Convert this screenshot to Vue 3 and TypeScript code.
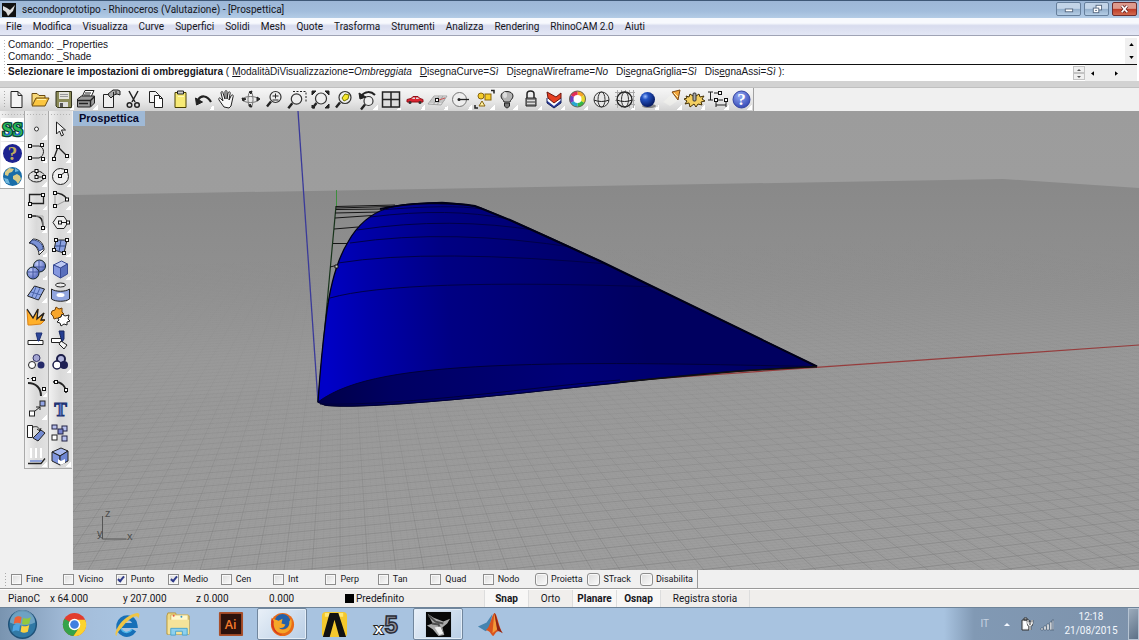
<script setup lang="ts">
import { ref } from 'vue'

interface Icon {
  name: string
  art: string
  more?: boolean
}

const menus = [
  'File', 'Modifica', 'Visualizza', 'Curve', 'Superfici', 'Solidi', 'Mesh',
  'Quote', 'Trasforma', 'Strumenti', 'Analizza', 'Rendering', 'RhinoCAM 2.0', 'Aiuti',
]

const options = [
  { before: '', key: 'M', after: 'odalitàDiVisualizzazione', value: 'Ombreggiata' },
  { before: '', key: 'D', after: 'isegnaCurve', value: 'Sì' },
  { before: 'D', key: 'i', after: 'segnaWireframe', value: 'No' },
  { before: 'Di', key: 's', after: 'egnaGriglia', value: 'Sì' },
  { before: 'Dis', key: 'e', after: 'gnaAssi', value: 'Sì' },
]

/* small square handle used by the curve tools */
const h = (x: number, y: number): string =>
  `<rect x="${x - 1.5}" y="${y - 1.5}" width="3" height="3" fill="#fff" stroke="#111"/>`
const line = (d: string, w = 1, c = '#222'): string =>
  `<path d="${d}" fill="none" stroke="${c}" stroke-width="${w}"/>`
const shape = (d: string, fill: string, stroke = '#222'): string =>
  `<path d="${d}" fill="${fill}" stroke="${stroke}" stroke-linejoin="round"/>`
const lens = (x: number, y: number, r: number, fill = '#eee'): string =>
  `<path d="M${x - r + 1} ${y + r - 1}l-4 5" stroke="#222" stroke-width="2.4"/><circle cx="${x}" cy="${y}" r="${r}" fill="${fill}" stroke="#333" stroke-width="1.2"/>`
const glyph = (t: string, x: number, y: number, size: number, fill: string, extra = ''): string =>
  `<text x="${x}" y="${y}" font-family="Liberation Serif, serif" font-weight="bold" font-size="${size}" text-anchor="middle" fill="${fill}" ${extra}>${t}</text>`

const toolbar: Icon[] = [
  { name: 'Nuovo', art: shape('M6 3.5h7l4 4v12H6z', '#f4f4f4') + line('M13 3.5v4h4') },
  { name: 'Apri', art: shape('M3 17V5.500h5l2 2h6v3', '#f9d978', '#6a4a10') + shape('M3 18l4-8h13l-4 8z', '#fbc640', '#6a4a10') + line('M8 11.500h9', 1, '#fff2a8') },
  { name: 'Salva', more: true, art: shape('M4 3.500h15.500v16H5.500L4 18z', '#8b8b58', '#33331c') + '<rect x="7" y="4" width="10" height="7" fill="#e4e4dc"/><rect x="7" y="14" width="9" height="5" fill="#ddd"/><rect x="8" y="15" width="3" height="4" fill="#555"/>' + line('M8 6.500h8M8 8.500h8', 1, '#999') },
  { name: 'Stampa', more: true, art: shape('M7 9L10 2.500h9L16 9z', '#fff') + line('M10 5h6M9 7h6') + shape('M2.500 11l4-3h13v7l-4 4h-13z', '#9a9a9a') + line('M2.500 12.500h13l4-4M15.500 12.500v6M4 15.500h9', 1.400) },
  { name: 'Proprietà documento', art: shape('M4.500 6.500h10v13h-10z', '#eee') + shape('M9 6l5-4h5l2 1v4l-3-1-3 1-3 3-2-2z', '#aaa') + line('M14.500 4v3M17 3v3') },
  { name: 'Taglia', art: line('M7 3l6 11M16 3l-6 11', 1.500) + '<circle cx="7.500" cy="17" r="2.300" fill="none" stroke="#222" stroke-width="1.500"/><circle cx="15" cy="17" r="2.300" fill="none" stroke="#222" stroke-width="1.500"/>' },
  { name: 'Copia', art: shape('M4.500 3.500h6l3 3v8h-9z', '#f4f4f4') + shape('M9.500 7.500h5l3 3v9h-8z', '#fff') + line('M14.500 7.500v3h3') },
  { name: 'Incolla', art: shape('M6 4.500h11v15H6z', '#f7ea76', '#4a4000') + shape('M8.500 3h6v3h-6z', '#ccc') + line('M9 8.500h6', 1, '#fff8b8') },
  { name: 'Annulla', more: true, art: line('M6 12c3-5 9-5 13 2', 2.200) + shape('M3.500 10l1 7 6-3z', '#222') },
  { name: 'Pan', art: shape('M8 19l-5-7c-1-2 1-3 2-1l2 2-2-8c0-2 2-2 2 0l2 6V4c0-2 2-2 2 0v7l1-6c1-2 3-1 2 1l-1 6 2-4c1-2 3-1 2 1l-2 9-2 2z', '#f7f7f7') },
  { name: 'Ruota vista', art: '<ellipse cx="11.500" cy="11.500" rx="8" ry="3" fill="none" stroke="#777"/><ellipse cx="11.500" cy="11.500" rx="2.500" ry="8" fill="none" stroke="#777"/>' + shape('M3 10l4 1-3 2zM21 11l-3 2v-4zM10 4l3-1-1 3zM10 18l3 1-2-3z', '#333') },
  { name: 'Zoom dinamico', art: lens(13.5, 9, 5.5) + line('M10.500 8h6M13.500 5.500v5M10.500 12h6') },
  { name: 'Zoom finestra', art: '<path d="M7 3.500h13v10" fill="none" stroke="#222" stroke-dasharray="2 1.500"/>' + lens(10.5, 11, 5.2) },
  { name: 'Zoom estensioni', art: lens(12, 10.5, 5.5) + shape('M3 3h4L3 7zM20 3h-4l4 4zM20 20h-4l4-4zM3 20v-3l3 3z', '#222') },
  { name: 'Zoom selezionati', art: lens(13, 9.5, 6) + shape('M10 10l3-4 4 1-1 4-4 2z', '#f7e82a', '#777600') },
  { name: 'Annulla vista', more: true, art: lens(12.5, 13, 4.5) + line('M5 8c4-5 10-5 14-1', 2) + shape('M3 5l1 6 6-2z', '#222') },
  { name: 'Quattro viste', more: true, art: '<rect x="3.500" y="4" width="17" height="15" fill="#ddd" stroke="#222" stroke-width="1.500"/>' + line('M12 4v15M3.500 11.500h17', 1.500) },
  { name: 'Vista da destra', more: true, art: shape('M4 11.500l4-1 2-2h5l2 2 3 1v2.500H4z', '#dd2531', '#8e1119') + '<path d="M9 11l1-1.500h2V11zM13 9.500h2l1 1.500h-3z" fill="#ddd"/><circle cx="7" cy="14.500" r="1.500" fill="#333"/><circle cx="17" cy="14.500" r="1.500" fill="#333"/>' },
  { name: 'Piano di costruzione', more: true, art: line('M2 16l6-8h13l-6 9zM5 12h14M7 10h13M4 14h13M7 17l6-9M11 17l6-9', 1, '#a5a5a5') + h(11, 12) + line('M13 12l6-2', 1, '#c55') },
  { name: 'Raggio', more: true, art: '<circle cx="10.500" cy="11.500" r="7" fill="#eee" stroke="#777"/><circle cx="10" cy="11.500" r="1.500" fill="#222"/>' + line('M11 11.500h9', 1.300) },
  { name: 'Seleziona', more: true, art: '<circle cx="8" cy="8" r="3" fill="#f5cc2a" stroke="#87650e"/><rect x="12" y="6" width="6" height="6" fill="#f5cc2a" stroke="#87650e"/>' + shape('M6 18l3-5 3 5z', '#fff0a0', '#87650e') + line('M18 2.500h3v3M2 17v3h3', 1.500) },
  { name: 'Nascondi', more: true, art: shape('M8 14c0-2-3-3-3-6 0-6 12-6 12 0 0 3-3 4-3 6z', '#b4b4b4') + shape('M8.500 15h5v3l-2 2h-1l-2-2z', '#777') + '<ellipse cx="9" cy="7" rx="2" ry="3" fill="#ddd"/>' },
  { name: 'Blocca', more: true, art: line('M8 10V6c0-4 7-4 7 0v4', 1.500) + shape('M7 10h10v8H7z', '#888') + line('M8 12.500h8M8 15.500h8', 1, '#ddd') },
  { name: 'Livelli', more: true, art: shape('M4 10l7 6 7-6v5l-7 5-7-5z', '#273b9c', '#17215b') + '<path d="M4.500 10l6.500 5 6.500-5v2.500L11 18l-6.500-5z" fill="#fff"/>' + shape('M4 4l9 5 5-4v5l-7 5-6-5z', '#e64022', '#6d160e') },
  { name: 'Colore', more: true, art: '<path d="M11.500 3a8 8 0 0 1 7 4l-7 4z" fill="#f5a626"/><path d="M18.500 7a8 8 0 0 1 0 8l-7-4z" fill="#e9d72a"/><path d="M18.500 15a8 8 0 0 1-7 4v-8z" fill="#37b944"/><path d="M11.500 19a8 8 0 0 1-7-4l7-4z" fill="#28a9d2"/><path d="M4.500 15a8 8 0 0 1 0-8l7 4z" fill="#6d3fc2"/><path d="M4.500 7a8 8 0 0 1 7-4v8z" fill="#e22c58"/><circle cx="11.500" cy="11" r="4" fill="#fff"/><circle cx="11.500" cy="11" r="8" fill="none" stroke="#665"/>' },
  { name: 'Wireframe', art: '<circle cx="11.500" cy="11.500" r="7.500" fill="#e8e8e8" stroke="#333"/><ellipse cx="11.500" cy="11.500" rx="3.500" ry="7.500" fill="none" stroke="#333"/>' + line('M4 12c4 2 11 2 15 0') },
  { name: 'Anteprima', more: true, art: line('M2 4.500h20M2 8.500h20M2 12.500h20M2 16.500h20M4.500 2v18M8.500 2v18M12.500 2v18M16.500 2v18M20.500 2v18', 1, '#aaa') + '<circle cx="11.500" cy="11.500" r="7.500" fill="#e8e8e8" stroke="#222" stroke-width="1.300"/><ellipse cx="12" cy="11.500" rx="3.500" ry="7.500" fill="none" stroke="#333"/>' + line('M4 12c4 2 11 2 15 0') },
  { name: 'Renderizza', more: true, art: '<ellipse cx="13" cy="18" rx="7" ry="2" fill="#888"/><circle cx="11.500" cy="11.500" r="7.500" fill="url(#ball)"/>' },
  { name: 'Luce', more: true, art: '<path d="M3 14L14 4l5 8-9 6z" fill="#f5f5f0" opacity=".5"/>' + shape('M12 4l8-2-2 10z', '#f3a63c', '#7d4a17') + line('M14 5l4 4', 1, '#fff2b8') },
  { name: 'Opzioni', more: true, art: shape('M3 8l3 1 1-3 3 2 1-3 2 3 3-2 1 3 4-1-2 3 3 2-4 1 1 3-4-1-2 3-2-3-4 3-1-4-4 1 2-3-3-2 3-1z', '#f3cf62', '#443107') + '<rect x="10" y="5" width="3" height="8" rx="1" fill="#aaa" stroke="#333"/>' },
  { name: 'Quote', more: true, art: line('M2 4h5M2 12h5M4.500 4v8M8 5h5M12 12h5M10 13v6M20 13v6M10 17h10') + h(14, 5) + h(10, 12) + h(20, 12) },
  { name: 'Guida', more: true, art: '<circle cx="11.500" cy="11.500" r="8.500" fill="url(#help)" stroke="#3444a0"/>' + glyph('?', 11.5, 17, 17, '#fff') },
]

const plugins: Icon[] = [
  { name: 'RhinoCAM', art: '<rect width="23" height="23" fill="#fff"/>' + glyph('SS', 11.5, 18, 19, '#2dbb55', 'stroke="#06433a" stroke-width="2.500" paint-order="stroke"') + line('M4 16c3 2 5 0 5-3M14 16c3 2 5 0 5-3', 1.5, '#2467d9') },
  { name: 'Guida RhinoCAM', art: '<rect width="23" height="23" fill="#fff"/><circle cx="11.500" cy="11.500" r="9.500" fill="#1d2390"/>' + glyph('?', 11.5, 18, 19, '#bfae5e') },
  { name: 'Sito web', art: '<rect width="23" height="23" fill="#fff"/><circle cx="11.500" cy="11.500" r="9.500" fill="#196da8"/><path d="M4 7l4-4 5 1-2 3-3 1-1 3-3-1zM12 11l4-2 3 2 1 3-3 5-2-3-3-2z" fill="#d8cb87"/><path d="M3 13l4 1 2 5-4-1zM14 3l4 3-4 1z" fill="#72b8dd"/>' },
]

const leftTools: Icon[] = [
  { name: 'Punto', more: true, art: '<circle cx="11.500" cy="11" r="2" fill="#fff" stroke="#333"/>' },
  { name: 'Curva', more: true, art: line('M5 5h9c6 1 6 10 0 12H6') + h(5, 5) + h(17, 4) + h(5, 17) + h(18, 18) },
  { name: 'Ellisse', more: true, art: '<ellipse cx="11.500" cy="11.500" rx="8" ry="5.500" fill="none" stroke="#222"/>' + line('M11.500 6v6h8') + h(11.5, 6) + h(11.5, 12) + h(19, 12) },
  { name: 'Rettangolo', more: true, art: line('M4.500 6.500h14v9h-14z', 1.300) + h(5, 16) + h(18, 7) },
  { name: 'Raccorda curve', more: true, art: line('M5 5h5c7 0 8 5 8 12', 1.700) + line('M11 5h7v12', 1, '#aaa') + h(5, 5) + h(18, 17) },
  { name: 'Superficie rete', more: true, art: shape('M4 8l4-4c7 0 11 5 11 11l-5 5c0-6-4-11-10-12z', '#fff') + shape('M7 5c7 0 11 4 11 9l-4 2c-1-4-4-7-9-8z', '#7a91d5', '#31457e') },
  { name: 'Sfere', more: true, art: '<circle cx="14.500" cy="8" r="6" fill="url(#solid)" stroke="#122"/>' + line('M9 9h11M14 2v12', 1, '#4456a0') + '<circle cx="8" cy="15" r="6" fill="url(#solid)" stroke="#122"/>' + line('M2 14h12M8 9v12', 1, '#4456a0') },
  { name: 'Superficie', more: true, art: shape('M2.500 15l7-10 10 3-6 11z', '#91a8e6') + line('M6 11l10 3M11 6l-4 10M15 7l-5 11', 1, '#4a63a8') },
  { name: 'Esplodi', art: shape('M3 20L2 5l6 8 5-9-1 10 7-6-3 7h4l-4 4-10 1z', '#ffb02a', '#d98218') + line('M2 4l6 9 5-9-1 10 7-6-3 7h4', 1.300) },
  { name: 'Taglia oggetto', art: shape('M3 12.500h15v4H3z', '#fff') + shape('M11 5h6l-3 8h-1z', '#2c4699', '#1c2e74') },
  { name: 'Raggruppa', art: '<circle cx="11.500" cy="7" r="3.500" fill="#a2a4d2" stroke="#336"/><circle cx="7" cy="14" r="3.500" fill="#fff" stroke="#222"/><circle cx="16" cy="14" r="3.500" fill="#252a69"/>' },
  { name: 'Modifica punti', more: true, art: line('M3 8c8 0 13 5 13 13', 2) + '<path d="M2 3.500h8" stroke="#333" stroke-dasharray="2 2"/>' + h(9, 4) + h(19, 14) },
  { name: 'Sposta', more: true, art: '<rect x="4.500" y="13" width="5" height="5" fill="#fff" stroke="#222"/><rect x="15" y="3" width="5" height="5" fill="#93a5e5" stroke="#222"/>' + line('M10 13l5-4M11 9h4v3') },
  { name: 'Ruota oggetto', art: shape('M2.500 4.500h5v12h-5z', '#fff') + line('M8 6c4-1 6 0 7 4M12 8l3 2 1-3') + shape('M8 17l8-8 4 3-7 8z', '#748bd2') },
  { name: 'Proietta', more: true, art: line('M6 3v10M11 3v10M16 3v10', 2, '#fff') + line('M3 18.500h13l4-5', 1.300) + line('M5 16h12', 2, '#8da0d8') },
]

const rightTools: Icon[] = [
  { name: 'Seleziona oggetto', art: shape('M7.500 4v12l3-3 2 5 2-1-2-5h4z', '#f4f4f4') },
  { name: 'Polilinea', more: true, art: line('M5 17L9 6l9 9', 1.300) + h(5, 18) + h(9, 6) + h(18, 15) },
  { name: 'Cerchio', more: true, art: '<circle cx="11.500" cy="11.500" r="8" fill="#eee" stroke="#222"/>' + line('M11 11l6-5') + h(11, 11) + h(17, 6) },
  { name: 'Arco', more: true, art: line('M6 5c6 0 10 3 12 6', 1.3) + line('M6 5v13L18 12', 1, '#999') + h(6, 5) + h(18, 11.5) + h(6, 18) },
  { name: 'Poligono', more: true, art: shape('M4 11.500l4-6h7l4 6-4 6H8z', '#eee') + line('M11 11.500h8') + h(11, 11.500) + h(19, 11.500) },
  { name: 'Superficie da punti', more: true, art: shape('M7 5h11l-3 13-10-3z', '#8ca2e0') + line('M6 11h11M12 5l-2 12', 1, '#314987') + h(7, 5) + h(18, 5) + h(5, 15) + h(15, 18) },
  { name: 'Parallelepipedo', more: true, art: shape('M4.500 7l8-4 6 3-7 4z', '#bdc9f3', '#3a4c94') + shape('M4.500 7l7 3v10l-7-4z', '#8497df', '#3a4c94') + shape('M11.500 10l7-4v10l-7 4z', '#5a70bd', '#3a4c94') },
  { name: 'Superficie da curva', more: true, art: '<ellipse cx="11.500" cy="4" rx="5" ry="2" fill="#eee" stroke="#222"/>' + shape('M2.500 8c4 3 14 3 18 0v10c-4 3-14 3-18 0z', '#91a5df') + '<ellipse cx="11.500" cy="14" rx="4" ry="2" fill="#fff"/>' },
  { name: 'Unisci', art: shape('M3 6l3-1 1-3 3 2 3-1v4l2 2-3 2-1 3-3-1-3 1-1-3-2-2z', '#f7a52a', '#70420c') + shape('M9 13l3-1 1-3 3 2 4-1-1 4 2 2-3 1v3l-3-1-3 2-1-3-3-1 2-2z', '#fff') },
  { name: 'Dividi', art: shape('M2.500 10.500h10v4h-10z', '#fff') + shape('M10 3h5v8l-2 3z', '#243d92', '#17265e') + shape('M12 13l6 4-3 4-5-5z', '#f3f3f3') },
  { name: 'Separa gruppo', more: true, art: '<circle cx="12" cy="8" r="4" fill="#b3b7dd" stroke="#1b1d48" stroke-width="2"/><circle cx="8" cy="14" r="4" fill="#fff" stroke="#1b1d48" stroke-width="1.500"/><circle cx="15" cy="14" r="4" fill="#1e2053"/>' },
  { name: 'Curva libera', art: line('M4 7c9-1 13 5 13 11', 1.700) + h(7, 7) + h(17, 15) },
  { name: 'Testo', art: glyph('T', 11.5, 18, 19, '#5876ca', 'stroke="#1b3070"') },
  { name: 'Serie', art: '<rect x="3" y="4" width="5" height="4" fill="#b8c1ef" stroke="#224"/><rect x="13" y="5" width="5" height="5" fill="#b8c1ef" stroke="#224"/><rect x="9" y="8" width="5" height="5" fill="#7884d0" stroke="#224"/><rect x="3" y="14" width="5" height="5" fill="#fff" stroke="#222"/><rect x="13" y="15" width="5" height="5" fill="#b8c1ef" stroke="#224"/>' },
  { name: 'Estrai superficie', more: true, art: shape('M3 7l9-4 7 3-8 5z', '#a7b9f0') + shape('M3 7l8 4v9l-8-4z', '#8096df') + shape('M11 11l8-5v10l-8 4z', '#6d86d3') + '<path d="M9 14l3 2 4-2v4l-4 2-3-2z" fill="#fff"/>' },
]

const snaps = ref([
  { label: 'Fine', on: false }, { label: 'Vicino', on: false }, { label: 'Punto', on: true },
  { label: 'Medio', on: true }, { label: 'Cen', on: false }, { label: 'Int', on: false },
  { label: 'Perp', on: false }, { label: 'Tan', on: false }, { label: 'Quad', on: false },
  { label: 'Nodo', on: false }, { label: 'Proietta', on: false, wide: true },
  { label: 'STrack', on: false, wide: true }, { label: 'Disabilita', on: false, wide: true },
])

const modes = ref([
  { label: 'Snap', on: true }, { label: 'Orto', on: false },
  { label: 'Planare', on: true }, { label: 'Osnap', on: true },
])

const apps: (Icon & { open?: boolean })[] = [
  { name: 'Chrome', art: '<circle cx="14" cy="14" r="12" fill="#e23c2e"/><path d="M14 14L3.500 8A12 12 0 0 0 13 26l6-9z" fill="#35a34a"/><path d="M14 9h11a12 12 0 0 1-12 17l6-9z" fill="#fbd42d"/><circle cx="14" cy="14" r="6" fill="#fff"/><circle cx="14" cy="14" r="4.500" fill="#3e7fe0"/>' },
  { name: 'Internet Explorer', art: '<path d="M22 20c-6 9-18 3-16-6S22 4 23 15H9" fill="none" stroke="#1770b8" stroke-width="5"/><path d="M20 19c-5 6-12 3-12-4" fill="none" stroke="#4bb6ea" stroke-width="1.500"/><path d="M4 26C-1 25 8 5 25 2c4 0 2 4 1 6 0-6-9 0-15 7S3 24 4 26" fill="#efc545"/>' },
  { name: 'Esplora risorse', art: '<path d="M2 5l1-3h8l1 3h13v19H2z" fill="#efd985" stroke="#b6973e"/><path d="M6 4h18v12H6z" fill="#fff8cd" stroke="#cdb35d"/><path d="M3 9h22v15H3z" fill="#f5e39a"/><path d="M6 25v-7h17v7h-5v-4h-7v4z" fill="#8ed0ed" stroke="#4aa4cf"/><circle cx="9" cy="5" r="1" fill="#e54"/><circle cx="17" cy="6" r="1" fill="#39c"/>' },
  { name: 'Illustrator', art: '<rect x="2" y="1" width="25" height="25" rx="1" fill="#a84f2b"/><rect x="4" y="3" width="21" height="21" fill="#2c120c"/><text x="8" y="19" font-family="Open Sans, sans-serif" font-size="13" font-weight="600" fill="#f47b2d">Ai</text>' },
  { name: 'Firefox', open: true, art: '<circle cx="14" cy="14" r="12" fill="#e86a18"/><circle cx="14" cy="11" r="8" fill="#2461a9"/><path d="M3 7c2 2 4 2 7 3l4-2-1 5 4 1c-1 4-5 4-7 3 4 5 12 2 11-6l2-3c2 8-2 15-9 15S1 16 3 7z" fill="#f5a729"/><path d="M3 7C0 17 7 25 14 25c-7-2-10-8-9-14z" fill="#d7371f"/>' },
  { name: 'Ansys', art: '<rect x="1" y="1" width="26" height="26" rx="4" fill="#f4c82d"/><path d="M4 2h19v4H4z" fill="#ffe876"/><path d="M2 27L9 2h9l8 25h-7L14 9 9 27z" fill="#111"/>' },
  { name: 'Ricerca X5', art: '<text x="19" y="23" font-family="Liberation Sans, sans-serif" font-weight="bold" font-size="25" text-anchor="middle" fill="#8f929e" stroke="#292b35" stroke-width="1.500">5</text><text x="6" y="24" font-family="Liberation Sans, sans-serif" font-weight="bold" font-size="16" text-anchor="middle" fill="#fff" stroke="#222" stroke-width="2" paint-order="stroke">x</text>' },
  { name: 'Rhinoceros', open: true, art: '<rect x="1" y="1" width="26" height="26" fill="#080808"/><path d="M3 3l6 4 10 4 7-3-3 5-5 4 2 8-6 1-6-7-6-4 6-2z" fill="#aaa"/><path d="M4 5l7 6 8 2M7 13l7 1 4 8" fill="none" stroke="#4d4d4d" stroke-width="2"/><path d="M10 17l6-1 3 7-4 2z" fill="#eee"/>' },
  { name: 'Matlab', art: '<path d="M1 16l9-4 6-9-3 14-4 4z" fill="#4584b0"/><path d="M9 20c5-3 6-16 9-18 3 0 5 17 9 21-5-4-7-2-10 3-2 0-3-6-8-6z" fill="#d8531f"/><path d="M18 2l-2 21 5-4z" fill="#f39a3a"/><path d="M18 2c2 0 4 16 9 21l-6-3z" fill="#8b2418"/>' },
]

/* Ground grid: two families of lines, evenly spaced on the front edge, each
   running to its own vanishing point. */
const front = 570
const family = (vx: number, vy: number, from: number, to: number, step: number, reach: number): string => {
  const parts: string[] = []
  for (let x = from; x <= to; x += step) {
    const ex = x + (vx - x) * reach
    const ey = front + (vy - front) * reach
    parts.push(`M${x} ${front}L${ex.toFixed(1)} ${ey.toFixed(1)}`)
  }
  return parts.join('')
}
const gridMajor = family(341, 135, -1900, 2900, 28, 0.85) + family(4631, 117, -9000, 1200, 100, 1)
const gridMinor = family(341, 135, -700, 1700, 7, 0.7) + family(4631, 117, -2600, 1200, 25, 1)

const skin = 'M318 402C320 372 322 349 326 318C330 285 337 260 348 242C358 224 372 213 388 208C404 203 424 203 442 202.500C458 204 472 204 486 210C520 224 560 242 600 261L817 366.500C730 370 665 377 615 383C540 391 470 399 410 403C370 406 340 407 325 405Z'
const struts = 'M336 206.500L395 205M336 208L390 206.500M336 209.500L384 209M335 213L380 212M335 218L372 215.500M334 229L358 227M333 243.500h14M330 267l8-2M327 304l3-1'
const ribs = 'M380 210Q450 204 482 209M370 217Q450 207 508 219M357 230Q450 216 540 231M350 243Q450 228 578 248M338 263Q430 248 620 265M330 298Q400 278 660 287'
</script>

<template>
  <div class="desktop">
    <svg class="defs" aria-hidden="true">
      <defs>
        <radialGradient id="ball" cx=".35" cy=".3" r=".7"><stop offset="0" stop-color="#9fc0ff" /><stop offset=".3" stop-color="#2454c4" /><stop offset="1" stop-color="#061a62" /></radialGradient>
        <radialGradient id="help" cx=".4" cy=".3" r=".8"><stop offset="0" stop-color="#93a9f4" /><stop offset="1" stop-color="#2b3fae" /></radialGradient>
        <radialGradient id="solid" cx=".35" cy=".3" r=".8"><stop offset="0" stop-color="#c0ccfa" /><stop offset="1" stop-color="#4a5eb4" /></radialGradient>
      </defs>
    </svg>

    <header class="title">
      <svg class="app-icon" viewBox="0 0 14 14" aria-hidden="true"><rect width="14" height="14" fill="#111" /><path d="M1 3l4 2 3 2 5-5-2 6-2 2-3 3-2-4-3-2z" fill="#ddd" /></svg>
      <h1>secondoprototipo - Rhinoceros (Valutazione) - [Prospettica]</h1>
      <div class="window-buttons">
        <button aria-label="Riduci a icona"><svg viewBox="0 0 24 13"><rect x="8.500" y="6.500" width="8" height="3" fill="#fff" stroke="#566880" /></svg></button>
        <button aria-label="Ripristina"><svg viewBox="0 0 24 13"><rect x="11.500" y="2.500" width="6" height="5" fill="#fff" stroke="#566880" /><rect x="8.500" y="5.500" width="6" height="5" fill="#fff" stroke="#566880" /><rect x="10.500" y="7.500" width="2" height="1" fill="#566880" /></svg></button>
        <button class="close" aria-label="Chiudi"><svg viewBox="0 0 24 13"><path d="M9 3l6 7M15 3l-6 7" stroke="#612020" stroke-width="3.500" /><path d="M9 3l6 7M15 3l-6 7" stroke="#fff" stroke-width="2" /></svg></button>
      </div>
    </header>

    <nav class="menu">
      <button v-for="m in menus" :key="m">{{ m }}</button>
    </nav>

    <section class="command">
      <div class="history">
        <div class="lines"><p>Comando: _Properties</p><p>Comando: _Shade</p></div>
        <div class="scroll-v">
          <button aria-label="Scorri su"><svg viewBox="0 0 6 4"><path d="M0 4l3-4 3 4z" /></svg></button>
          <button aria-label="Scorri giù"><svg viewBox="0 0 6 4"><path d="M0 0l3 4 3-4z" /></svg></button>
        </div>
      </div>
      <div class="prompt">
        <label for="cmd"><b>Selezionare le impostazioni di ombreggiatura</b> (<span v-for="o in options" :key="o.value + o.after" class="option">{{ o.before }}<u>{{ o.key }}</u>{{ o.after }}=<i>{{ o.value }}</i></span> ):</label>
        <input id="cmd" type="text" autocomplete="off">
        <div class="spin">
          <button aria-label="Precedente"><svg viewBox="0 0 6 4"><path d="M1 3l2-2 2 2z" fill="#555" /></svg></button>
          <button aria-label="Successivo"><svg viewBox="0 0 6 4"><path d="M1 1l2 2 2-2z" fill="#555" /></svg></button>
        </div>
        <div class="scroll-h">
          <button aria-label="Scorri a sinistra"><svg viewBox="0 0 4 6"><path d="M4 0L0 3l4 3z" /></svg></button>
          <button aria-label="Scorri a destra"><svg viewBox="0 0 4 6"><path d="M0 0l4 3-4 3z" /></svg></button>
        </div>
      </div>
    </section>

    <div class="toolbar-row">
      <div class="toolbar" role="toolbar" aria-label="Standard">
        <button v-for="t in toolbar" :key="t.name" :aria-label="t.name" :class="{ more: t.more }">
          <svg viewBox="0 0 23 23" v-html="t.art"></svg>
        </button>
      </div>
    </div>

    <main class="work">
      <aside class="side">
        <div class="palette short">
          <button v-for="t in plugins" :key="t.name" :aria-label="t.name"><svg viewBox="0 0 23 23" v-html="t.art"></svg></button>
        </div>
        <div class="palette">
          <button v-for="t in leftTools" :key="t.name" :aria-label="t.name" :class="{ more: t.more }"><svg viewBox="0 0 23 23" v-html="t.art"></svg></button>
        </div>
        <div class="palette">
          <button v-for="t in rightTools" :key="t.name" :aria-label="t.name" :class="{ more: t.more }"><svg viewBox="0 0 23 23" v-html="t.art"></svg></button>
        </div>
      </aside>

      <section class="viewport">
        <svg class="scene" viewBox="73 111 1066 459" preserveAspectRatio="xMinYMin slice" role="img" aria-label="Vista prospettica">
          <defs>
            <linearGradient id="sky" x1="0" y1="0" x2="0" y2="1"><stop offset="0" stop-color="#9c9c9c" /><stop offset="1" stop-color="#a3a3a3" /></linearGradient>
            <linearGradient id="ground" gradientUnits="userSpaceOnUse" x1="0" y1="185" x2="0" y2="570"><stop offset="0" stop-color="#898989" /><stop offset=".25" stop-color="#909090" /><stop offset=".45" stop-color="#999" /><stop offset="1" stop-color="#9e9e9e" /></linearGradient>
            <linearGradient id="major" gradientUnits="userSpaceOnUse" x1="0" y1="230" x2="0" y2="570"><stop offset="0" stop-color="#777" stop-opacity="0" /><stop offset=".4" stop-color="#777" stop-opacity=".1" /><stop offset="1" stop-color="#747474" stop-opacity=".4" /></linearGradient>
            <linearGradient id="minor" gradientUnits="userSpaceOnUse" x1="0" y1="260" x2="0" y2="570"><stop offset="0" stop-color="#888" stop-opacity="0" /><stop offset="1" stop-color="#808080" stop-opacity=".14" /></linearGradient>
            <linearGradient id="skin" gradientUnits="userSpaceOnUse" x1="320" y1="310" x2="640" y2="280"><stop offset="0" stop-color="#0000c8" /><stop offset=".15" stop-color="#0000ab" /><stop offset=".4" stop-color="#000083" /><stop offset="1" stop-color="#000060" /></linearGradient>
            <linearGradient id="belly" gradientUnits="userSpaceOnUse" x1="318" y1="0" x2="817" y2="0"><stop offset="0" stop-color="#000048" /><stop offset=".15" stop-color="#000062" /><stop offset=".5" stop-color="#000078" /><stop offset="1" stop-color="#000060" /></linearGradient>
            <clipPath id="floor"><path d="M73 195L1003 179L1139 188V570H73z" /></clipPath>
            <clipPath id="body"><path :d="skin" /></clipPath>
          </defs>
          <rect x="73" y="111" width="1066" height="459" fill="url(#sky)" />
          <path d="M73 195L1003 179L1139 188V570H73z" fill="url(#ground)" />
          <g clip-path="url(#floor)" fill="none" stroke-width="1">
            <path :d="gridMinor" stroke="url(#minor)" />
            <path :d="gridMajor" stroke="url(#major)" />
          </g>
          <path d="M298 111L318 402" stroke="#3a3a9a" stroke-width="1.300" />
          <path d="M318 402L1139 345" stroke="#963c3c" stroke-width="1.200" />
          <path d="M336.500 190V206" stroke="#3d8e3d" />
          <path d="M336 206L318 402" stroke="#17331a" stroke-width="1.200" />
          <path :d="struts" fill="none" stroke="#151515" />
          <path :d="skin" fill="url(#skin)" stroke="#000018" stroke-width="1.300" />
          <path d="M318 402C350 378 410 370 490 366C600 361 720 365 817 366.500C730 370 665 377 615 383C540 391 470 399 410 403C370 406 340 407 325 405Z" fill="url(#belly)" stroke="#00003a" />
          <path :d="ribs" clip-path="url(#body)" fill="none" stroke="#000048" />
          <path d="M380 209C410 202 450 202 475 206L510 220L600 261L817 366.500" fill="none" stroke="#000018" stroke-width="2" />
          <path d="M320 404C410 406 540 386 620 380" fill="none" stroke="#00003a" />
          <path d="M620 382L740 371L817 366.500" fill="none" stroke="#111" stroke-width="1.500" />
          <path d="M335 265h3v3h-3z" fill="#ccc" stroke="#111" />
          <g class="triad"><path d="M102.500 516v23h24M103 539l-5-4" fill="none" stroke="#555" /><text x="105" y="517">z</text><text x="127" y="540">x</text><text x="97" y="537">y</text></g>
        </svg>
        <h2>Prospettica</h2>
      </section>
    </main>

    <div class="osnap-row">
      <fieldset class="osnap" aria-label="Osnap">
        <label v-for="s in snaps" :key="s.label"><input v-model="s.on" type="checkbox" :class="{ wide: s.wide }">{{ s.label }}</label>
      </fieldset>
    </div>

    <footer class="status">
      <span class="plane">PianoC</span>
      <span class="coord">x 64.000</span>
      <span class="coord">y 207.000</span>
      <span class="coord">z 0.000</span>
      <span class="coord">0.000</span>
      <button class="layer"><span class="swatch"></span>Predefinito</button>
      <button v-for="m in modes" :key="m.label" class="mode" :class="{ on: m.on }" :aria-pressed="m.on" @click="m.on = !m.on">{{ m.label }}</button>
      <button class="record">Registra storia</button>
    </footer>

    <div class="taskbar">
      <button class="start" aria-label="Start">
        <svg viewBox="0 0 32 32"><circle cx="16" cy="16" r="15" fill="#1e5178" /><circle cx="16" cy="16" r="13.500" fill="#3179a5" /><path d="M3 14a13 13 0 0 1 26 0c-8 4-18 4-26 0z" fill="#8eb9d3" opacity=".65" /><path d="M8 9c3-2 5-2 7-.500L14 15c-2-1-5-1-7 .500z" fill="#ee6036" /><path d="M16.500 9c3 1.500 5 1 8-.500L23 15c-3 1.500-5 1.500-7.500.500z" fill="#91c83e" /><path d="M6.500 17c3-2 5-1.500 7-.500L12.500 23c-2-1-4-1-7 .500z" fill="#4fa5e3" /><path d="M15 17c3 1.500 5 1 8-.500l-1.500 7c-3 1.500-5 1.500-7.500 0z" fill="#fbd13f" /></svg>
      </button>
      <div class="apps">
        <button v-for="a in apps" :key="a.name" :aria-label="a.name" :class="{ open: a.open }"><svg viewBox="0 0 28 28" v-html="a.art"></svg></button>
      </div>
      <div class="tray">
        <span class="lang">IT</span>
        <button aria-label="Mostra icone nascoste"><svg viewBox="0 0 14 14"><path d="M4 9l3-3 3 3z" fill="#f4f8ff" /></svg></button>
        <button aria-label="Alimentazione"><svg viewBox="0 0 14 14"><path d="M2 3h7v10H2zM4 1h3v2H4z" fill="#f5f5f5" stroke="#333" /><path d="M4 5h4v6H4z" fill="#fff" /><path d="M7 6h6M8 3v3M12 3v3M8 6c0 3 4 3 4 0M10 8v5" fill="none" stroke="#222" stroke-width="2.500" /><path d="M7 6h6M8 3v3M12 3v3M8 6c0 3 4 3 4 0M10 8v5" fill="none" stroke="#fff" stroke-width="1.200" /></svg></button>
        <button aria-label="Rete"><svg viewBox="0 0 14 14"><path d="M1 11h2v2H1zM4 9h2v4H4zM7 7h2v6H7zM10 5h2v8h-2z" fill="#fff" stroke="#34455a" stroke-width=".500" /><path d="M12 3h2v10h-2z" fill="#aebccb" stroke="#34455a" stroke-width=".500" /></svg></button>
        <div class="clock"><time>12:18</time><time>21/08/2015</time></div>
        <button class="peek" aria-label="Mostra desktop"></button>
      </div>
    </div>
  </div>
</template>

<style>
html, body { margin: 0; background: #f0f0f0; }
</style>

<style scoped>
.desktop {
  display: flex;
  flex-direction: column;
  min-height: 100vh;
  background: #f0f0f0;
  color: #16161c;
  font: 10px/12px Roboto, "Noto Sans", sans-serif;
}
button { margin: 0; padding: 0; border: 0; background: none; color: inherit; font: inherit; }
svg { display: block; }
.defs { position: absolute; width: 0; height: 0; }
h1, h2, p { margin: 0; font-size: inherit; font-weight: inherit; }

.title {
  display: flex;
  align-items: center;
  box-sizing: border-box;
  height: 18px;
  padding: 0 2px;
  border-top: 1px solid #3e5876;
  background: linear-gradient(#9db7d7, #a2bddc 60%, #b3cce6);
}
.app-icon { width: 14px; height: 14px; margin-right: 6px; }
.window-buttons { display: flex; gap: 3px; align-self: flex-start; margin: 1px 0 0 auto; }
.window-buttons button { width: 25px; height: 14px; border: 1px solid #667f9c; border-radius: 2px; box-sizing: border-box; background: linear-gradient(#c2d4e8 45%, #92aecb 50%, #b5cde5); }
.window-buttons .close { background: linear-gradient(#de9a8d 45%, #bd3a25 50%, #d26b50); border-color: #6d2d2d; }
.window-buttons svg { width: 23px; height: 12px; }

.menu {
  display: flex;
  gap: 11px;
  box-sizing: border-box;
  height: 18px;
  padding: 0 6px;
  border-bottom: 1px solid #9fa3b5;
  background: linear-gradient(#f7f9fd 30%, #d8dcee 45%, #e3e7f5);
}

.command {
  padding: 2px 2px 0 7px;
  border-bottom: 6px solid #d2d2d2;
  background:
    repeating-linear-gradient(#bbb 0 1px, transparent 1px 3px) 4px 4px / 1px 36px no-repeat,
    #fff;
  font: 10px/12px "Liberation Sans", Arial, sans-serif;
}
.history { display: flex; border-bottom: 1px solid #111; }
.lines { flex: 1; padding: 1px 1px; }
.scroll-v { display: flex; flex-direction: column; justify-content: space-around; width: 12px; background: #f0f0f0; }
.scroll-v button, .scroll-h button { display: grid; place-items: center; flex: 1; }
.scroll-v svg { width: 5px; height: 3px; }
.prompt { display: flex; align-items: stretch; height: 16px; }
.prompt label { padding-left: 1px; line-height: 14px; white-space: nowrap; }
.option { margin-left: 3px; }
.option + .option { margin-left: 8px; }
.prompt input { flex: 1; min-width: 0; padding: 0 2px; border: 0; outline: 0; background: transparent; font: inherit; }
.spin { display: flex; flex-direction: column; width: 12px; padding: 1px 0; }
.spin button { display: grid; place-items: center; flex: 1; border: 1px solid #c4c4c4; background: #f0f0f0; }
.spin svg { width: 6px; height: 4px; }
.scroll-h { display: flex; gap: 10px; width: 52px; background: #f0f0f0; }
.scroll-h button { flex: none; width: 14px; }
.scroll-h svg { width: 3px; height: 5px; }

.toolbar-row { border-top: 1px solid #c0c0c0; background: #f0f0f0; }
.toolbar {
  display: flex;
  box-sizing: border-box;
  width: 754px;
  max-width: 100%;
  padding-left: 5px;
  border-right: 1px solid #a2a2a2;
  background:
    repeating-linear-gradient(#aaa 0 1px, transparent 1px 3px) 4px 3px / 1px 18px no-repeat,
    linear-gradient(#f6f6f6, #e6e6e6 60%, #d2d2d2);
}
.toolbar button { display: grid; place-items: center; flex: 1; }
.toolbar svg, .palette svg { width: 23px; height: 23px; }
.more { background: linear-gradient(135deg, transparent 50%, #fff 50%) right 1px bottom 1px / 5px 5px no-repeat; }

.work { display: flex; flex: 1; min-height: 0; }
.side { display: flex; align-items: flex-start; width: 73px; flex: none; background: #f0f0f0; }
.palette {
  display: flex;
  flex-direction: column;
  justify-content: space-between;
  box-sizing: border-box;
  width: 24px;
  height: 358px;
  padding-top: 7px;
  border: solid #aaa;
  border-width: 0 0 1px 1px;
  background:
    repeating-linear-gradient(90deg, #b4b4b4 0 1px, transparent 1px 3px) 2px 3px / 100% 1px no-repeat,
    linear-gradient(90deg, #f1f1f1, #d9d9d9 50%, #e1e1e1);
}
.palette button { display: grid; place-items: center; }
.palette.short { height: 78px; border-left: 0; }

.viewport { position: relative; flex: 1; min-width: 0; background: #9a9a9a; overflow: hidden; }
.scene { position: absolute; width: 100%; height: 100%; }
.viewport h2 {
  position: absolute;
  top: 0;
  left: 0;
  padding: 0 6px;
  background: #9fb9d6;
  color: #060628;
  font: bold 11px/15px "Liberation Sans", Arial, sans-serif;
}
.triad text { fill: #4e4e4e; font: 11px "Liberation Sans", Arial, sans-serif; }

.osnap-row {
  border-bottom: 1px solid #999;
  background:
    repeating-linear-gradient(#aaa 0 1px, transparent 1px 3px) 5px 3px / 1px 14px no-repeat,
    #f0f0f0;
}
.osnap {
  display: grid;
  grid-template-columns: repeat(13, 1fr);
  box-sizing: border-box;
  width: 698px;
  max-width: 100%;
  height: 18px;
  margin: 0;
  padding: 0 4px 0 11px;
  border: 0;
  border-right: 1px solid #999;
}
.osnap label { display: flex; align-items: center; gap: 4px; white-space: nowrap; font-size: 9px; }
.osnap input {
  appearance: none;
  box-sizing: border-box;
  flex: none;
  width: 11px;
  height: 11px;
  margin: 0;
  border: 1px solid #8d8d8d;
  background: linear-gradient(135deg, #dcdcdc, #fbfbfb);
  box-shadow: inset 0 0 0 1px #f8f8f8;
}
.osnap input.wide { width: 13px; height: 13px; border-radius: 3px; margin-right: -1px; }
.osnap input:checked::after {
  content: "";
  display: block;
  box-sizing: border-box;
  width: 4px;
  height: 7px;
  margin: 0 auto;
  border: solid #2f3b88;
  border-width: 0 2px 2px 0;
  transform: rotate(40deg);
}

.status {
  display: flex;
  align-items: stretch;
  box-sizing: border-box;
  height: 18px;
  border-top: 1px solid #fff;
  background: #f0eeec;
  line-height: 17px;
  white-space: nowrap;
}
.plane { width: 50px; padding-left: 8px; box-sizing: border-box; }
.coord { width: 73px; }
.layer { display: flex; align-items: center; gap: 2px; box-sizing: border-box; width: 142px; padding-left: 3px; }
.swatch { width: 9px; height: 9px; background: #000; }
.mode { width: 44px; box-sizing: border-box; border-left: 1px solid #ddd; }
.mode.on { background: #f8f7f6; font-weight: bold; }
.record { width: 90px; border: solid #ddd; border-width: 0 1px; }

.taskbar {
  display: flex;
  align-items: stretch;
  box-sizing: border-box;
  height: 33px;
  border-top: 1px solid #6f8499;
  background: linear-gradient(90deg, #7994b0, #a3bcd9 70px, #a8c3e0 120px, #a8c3e0 calc(100% - 195px), #8199b4 calc(100% - 165px), #7d92ab);
}
.start { width: 48px; padding-right: 4px; display: grid; place-items: center; }
.start svg { width: 31px; height: 31px; }
.apps { display: grid; grid-template-columns: repeat(9, 1fr); width: 468px; }
.apps button { display: grid; place-items: center; margin: 0 1px; border: 1px solid transparent; border-radius: 2px; }
.apps .open { border-color: #71869d; background: linear-gradient(135deg, #e9f0f8, #b9cee5); box-shadow: inset 0 0 0 1px #e3edf7; }
.apps svg { width: 27px; height: 27px; overflow: visible; }
.tray { display: flex; align-items: center; gap: 6px; margin-left: auto; color: #f3f7fc; }
.tray svg { width: 14px; height: 14px; }
.lang { margin-right: 5px; color: #c6d3e2; }
.clock { display: flex; flex-direction: column; align-items: center; width: 62px; line-height: 14px; }
.tray .peek { align-self: stretch; width: 11px; border: 1px solid #b5c3d2; background: linear-gradient(135deg, #9cabbb, #5d7087); }
</style>
